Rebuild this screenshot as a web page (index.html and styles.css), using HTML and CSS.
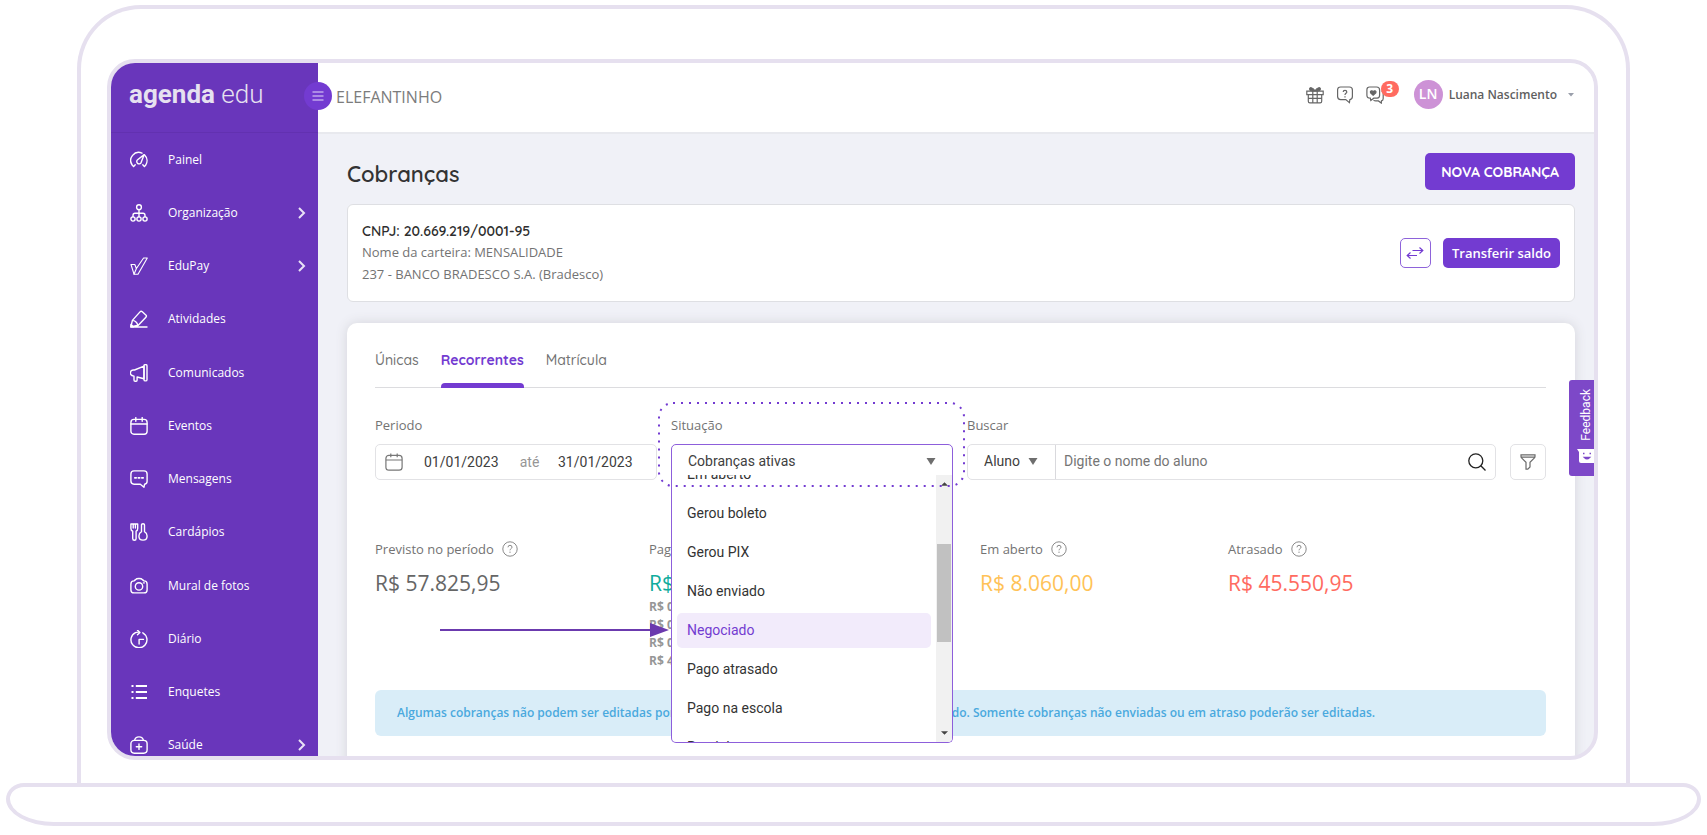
FILE: index.html
```html
<!DOCTYPE html>
<html lang="pt-BR">
<head>
<meta charset="utf-8">
<meta name="viewport" content="width=device-width, initial-scale=1">
<title>Cobranças - Agenda Edu</title>
<link rel="stylesheet" href="styles.css">
</head>
<body>
<div class="laptop">
  <div class="lid">
    <div class="screen">
      <aside class="sidebar">
        <a class="logo" href="#"><b>agenda</b> edu</a>
        <nav class="menu">
          <a href="#"><svg class="ico" viewBox="0 0 18 18"><path d="M3.6 15.6 2.2 14A8 8 0 0 1 12 2.1M14.6 4.1A8 8 0 0 1 15.8 14l-1.4 1.6M3.6 15.6l1.6-1.9M14.4 15.6l-1.6-1.9"/><path d="M14.2 3.6 7.6 8.8a2.3 2.3 0 1 0 3.5 2.8z"/></svg><span>Painel</span></a>
          <a href="#"><svg class="ico" viewBox="0 0 18 18"><circle cx="9" cy="3.2" r="2.4"/><circle cx="3" cy="15" r="2.1"/><circle cx="9" cy="15" r="2.1"/><circle cx="15" cy="15" r="2.1"/><path d="M9 5.6v7.3M3 12.9v-1.5Q3 9.3 5 9.3h8q2 0 2 2.1v1.5"/></svg><span>Organização</span><svg class="chev" viewBox="0 0 8 12"><path d="m1 1 5 5-5 5"/></svg></a>
          <a href="#"><svg class="ico thin" viewBox="0 0 18 18"><path d="M1 7.500h3.800l1.600 4L13.600 1h3.700L8 17.200H4z"/><path d="M4 17.200 6.400 11.500"/></svg><span>EduPay</span><svg class="chev" viewBox="0 0 8 12"><path d="m1 1 5 5-5 5"/></svg></a>
          <a href="#"><svg class="ico" viewBox="0 0 18 18"><path d="M.8 17H17M.8 17l1.600-6.600L10 1.900q1.100-1.200 2.300-.1l3.500 3.100q1.200 1.100.1 2.300l-7.600 8L.8 17M2.400 10.400q4 .2 5.400 4.800"/><path d="m1 14.500 2.400 2.300H1z" fill="#fff"/></svg><span>Atividades</span></a>
          <a href="#"><svg class="ico" viewBox="0 0 18 18"><path d="M14 2.200 4.500 6H3.600A2.900 2.900 0 0 0 3 11.800l1 .4v3.900q0 1.200 1.200 1.200h.9q1 0 1-1.200V13l6.900 1.800z"/><path d="M14 1.800q0-1.200 1.500-1.200T17 1.800v13.900q0 1.200-1.500 1.200T14 15.700z"/></svg><span>Comunicados</span></a>
          <a href="#"><svg class="ico" viewBox="0 0 18 18"><rect x=".9" y="2.4" width="16.2" height="14.8" rx="3"/><path d="M.9 7h16.2M5.800.6v3.600M12.200.6v3.600"/></svg><span>Eventos</span></a>
          <a href="#"><svg class="ico" viewBox="0 0 18 18"><path d="M4 .9h10q3.100 0 3.100 3.100v7.200q0 2.600-2.500 3l-.6 3-3.700-3H4q-3.100 0-3.100-3.100V4Q.9.9 4 .9z"/><path d="M4.800 7.800h1.400M8.300 7.800h1.400M11.800 7.800h1.400" stroke-width="1.7"/></svg><span>Mensagens</span></a>
          <a href="#"><svg class="ico" viewBox="0 0 18 18"><path d="M.9 1h6.800v4.500q0 2-1.600 2.700v7.200q0 1.800-1.700 1.800t-1.700-1.800V8.200Q.9 7.500.9 5.500zM3.200 1v4M5.400 1v4"/><path d="M11.500 1.900q0-1.200 1.500-1.200t1.500 1.200v6.800q2.600 1.600 2.600 4.200 0 4.200-4.100 4.200T8.900 12.900q0-2.600 2.600-4.200z"/></svg><span>Cardápios</span></a>
          <a href="#"><svg class="ico" viewBox="0 0 18 18"><path d="M4 3.900 5.600 2.600Q6.300 1.500 9 1.500t3.400 1.100L14 3.900q3.100.1 3.100 3v6q0 3-3.100 3H4q-3.100 0-3.100-3v-6q0-2.900 3.100-3z"/><circle cx="9" cy="9.4" r="3.7"/><path d="M13.400 5.900h.9"/></svg><span>Mural de fotos</span></a>
          <a href="#"><svg class="ico" viewBox="0 0 18 18"><path d="M12.800 2.800a8 8 0 1 1-7.300-.2Q7 1.900 9.500 2.200M7.500.2l2.400 2.200-2.400 2.400M9.100 14V9.400h4.400"/></svg><span>Diário</span></a>
          <a href="#"><svg class="ico bold" viewBox="0 0 18 18"><path d="M1.500 3h2M5.800 3H17M1.500 9h2M5.800 9H17M1.500 15h2M5.800 15H17"/></svg><span>Enquetes</span></a>
          <a href="#"><svg class="ico" viewBox="0 0 18 18"><rect x=".9" y="4.4" width="16.2" height="12.8" rx="3.4"/><path d="M4.700 4.200Q5.200.9 9 .9t4.300 3.300M9 8v5.400M6.300 10.700h5.400"/></svg><span>Saúde</span><svg class="chev" viewBox="0 0 8 12"><path d="m1 1 5 5-5 5"/></svg></a>
        </nav>
        <button class="toggle" type="button" aria-label="Recolher menu"><svg viewBox="0 0 12 10"><path d="M.5 1h11M.5 5h11M.5 9h11"/></svg></button>
      </aside>

      <div class="page">
        <header class="topbar">
          <span class="school">ELEFANTINHO</span>
          <div class="tools">
            <button class="plain" type="button" aria-label="Novidades"><svg class="tool" viewBox="0 0 18 18"><path d="M.8 5.2h16.4v3.4H.8zM2.3 8.6h13.4v6.6q0 1.6-1.6 1.6H3.9q-1.6 0-1.6-1.6zM6.8 5.2v11.6M11.2 5.2v11.6M2.3 12.3h13.4"/><path d="M9 4.8C6.3 5.2 3.6 4.8 3.6 3S6.3.9 9 4.8c2.7-3.9 5.4-3.6 5.4-1.8S11.7 5.2 9 4.8z" fill="#666"/></svg></button>
            <button class="plain" type="button" aria-label="Ajuda"><svg class="tool" viewBox="0 0 18 18"><path d="M4.600 1h8.800q3 0 3 3v6.600q0 2.700-2.500 3l-.5 3-3.600-3H4.600q-3 0-3-3V4q0-3 3-3z"/><path d="M7.200 6.100q0-1.800 1.800-1.800t1.800 1.700c0 1.400-1.800 1.300-1.800 2.900M9 10.300v1.100"/></svg></button>
            <button class="plain chat" type="button" aria-label="Mensagens, 3 novas"><svg class="tool" viewBox="0 0 18 18"><path d="M3.600 1h7q3 0 3 3v5.200q0 2.600-2.500 3H7.800l-3 2.300-.5-2.300q-3.400 0-3.400-3V4q0-3 2.700-3z"/><path d="M15.500 4.800q1.700.6 1.700 2.600v5q0 2-1.700 2.400l-.2 2.300-2.900-2.200H9.800q-1.300 0-2.300-.8"/><path d="M7.200 9.200 4.600 6.800q-.6-1.500.7-1.900 1.200-.2 1.900.9.700-1.100 1.900-.9 1.300.4.700 1.900z" fill="#666"/></svg><span class="badge">3</span></button>
          </div>
          <button class="plain user" type="button"><span class="avatar">LN</span><span>Luana Nascimento</span><svg class="caret" viewBox="0 0 6 4"><path d="M0 0h6L3 3.400z"/></svg></button>
        </header>

        <main class="content">
          <div class="title-row">
            <h1>Cobranças</h1>
            <button class="primary large" type="button">NOVA COBRANÇA</button>
          </div>

          <section class="wallet">
            <div>
              <h2>CNPJ: 20.669.219/0001-95</h2>
              <p>Nome da carteira: MENSALIDADE</p>
              <p>237 - BANCO BRADESCO S.A. (Bradesco)</p>
            </div>
            <div class="wallet-actions">
              <button class="swap" type="button" aria-label="Trocar carteira"><svg viewBox="0 0 18 12"><path d="M6.500 3.500h10M13.500.5l3.300 3-3.300 3M11 8.500H1.200M4.500 5.500l-3.300 3 3.300 3"/></svg></button>
              <button class="primary" type="button">Transferir saldo</button>
            </div>
          </section>

          <section class="panel">
            <nav class="tabs">
              <a href="#">Únicas</a>
              <a class="active" href="#">Recorrentes</a>
              <a href="#">Matrícula</a>
            </nav>

            <form class="filters">
              <div class="field">
                <label for="from">Periodo</label>
                <div class="box period">
                  <svg class="cal" viewBox="0 0 18 18"><rect x=".9" y="2.4" width="16.2" height="14.8" rx="3"/><path d="M.9 7h16.2M5.800.6v3.600M12.200.6v3.600"/></svg>
                  <input id="from" type="text" value="01/01/2023">
                  <span>até</span>
                  <input type="text" value="31/01/2023" aria-label="Fim do periodo">
                </div>
              </div>
              <div class="field">
                <label for="status">Situação</label>
                <div class="combo">
                  <select id="status" class="box"><option>Cobranças ativas</option></select>
                  <svg class="down" viewBox="0 0 10 7"><path d="M.5 0h9L5 7z"/></svg>
                  <div class="list">
                    <ul>
                      <li>Em aberto</li>
                      <li>Gerou boleto</li>
                      <li>Gerou PIX</li>
                      <li>Não enviado</li>
                      <li class="chosen">Negociado</li>
                      <li>Pago atrasado</li>
                      <li>Pago na escola</li>
                      <li>Parcialmente pago</li>
                    </ul>
                    <div class="scroll" aria-hidden="true">
                      <svg viewBox="0 0 8 4"><path d="M0 4h8L4 0z"/></svg>
                      <span class="thumb"></span>
                      <svg viewBox="0 0 8 4"><path d="M0 0h8L4 4z"/></svg>
                    </div>
                  </div>
                  <svg class="spot" aria-hidden="true"><rect x="1" y="1" rx="14"/></svg>
                  <svg class="arrow" viewBox="0 0 230 14" aria-hidden="true"><path class="shaft" d="M0 7h212"/><path d="M210 0v14l19-7z"/></svg>
                </div>
              </div>
              <div class="field grow">
                <label for="who">Buscar</label>
                <div class="box search">
                  <span class="kind"><select id="who"><option>Aluno</option></select><svg class="down" viewBox="0 0 10 7"><path d="M.5 0h9L5 7z"/></svg></span>
                  <input type="text" placeholder="Digite o nome do aluno" aria-label="Nome do aluno">
                  <button class="plain" type="button" aria-label="Pesquisar"><svg class="lens" viewBox="0 0 18 18"><circle cx="7.8" cy="7.8" r="7"/><path d="m12.800 12.800 4.700 4.700"/></svg></button>
                </div>
              </div>
              <button class="box funnel" type="button" aria-label="Filtrar"><svg viewBox="0 0 16 16"><path d="M1 .8h14v1.600q0 1-.8 1.700L10 8.300V13l-2.200 2.200H6V8.300L1.800 4.100Q1 3.400 1 2.400zM1 3.200h14"/></svg></button>
            </form>

            <dl class="stats">
              <div><dt>Previsto no período <svg class="help" viewBox="0 0 16 16"><circle cx="8" cy="8" r="7.2"/><path d="M6 6.300q0-2 2-2t2 1.900c0 1.500-2 1.500-2 3.100M8 10.600v1.300"/></svg></dt><dd>R$ 57.825,95</dd></div>
              <div class="paid"><dt>Pago</dt><dd>R$ 4.214,00</dd><dd class="sub">R$ 0,00</dd><dd class="sub">R$ 0,00</dd><dd class="sub">R$ 0,00</dd><dd class="sub">R$ 4.214,00</dd></div>
              <div class="open"><dt>Em aberto <svg class="help" viewBox="0 0 16 16"><circle cx="8" cy="8" r="7.2"/><path d="M6 6.300q0-2 2-2t2 1.900c0 1.500-2 1.500-2 3.100M8 10.600v1.300"/></svg></dt><dd>R$ 8.060,00</dd></div>
              <div class="late"><dt>Atrasado <svg class="help" viewBox="0 0 16 16"><circle cx="8" cy="8" r="7.2"/><path d="M6 6.300q0-2 2-2t2 1.900c0 1.500-2 1.500-2 3.100M8 10.600v1.300"/></svg></dt><dd>R$ 45.550,95</dd></div>
            </dl>

            <p class="notice">Algumas cobranças não podem ser editadas porque já foram pagas ou já têm algum boleto gerado. Somente cobranças não enviadas ou em atraso poderão ser editadas.</p>
          </section>
        </main>
      </div>

      <button class="feedback" type="button"><svg viewBox="0 0 18 14"><path d="M0 0h18v14H4q-2 0-2-2V3z" fill="#fff"/><path d="M6 4.500h1.500M12.500 4.500H14M7.500 8.500q2.500 2.500 5 0z" stroke="#7d48c8" stroke-width="1.5" fill="#7d48c8"/></svg><span>Feedback</span></button>
    </div>
  </div>
  <div class="base"></div>
</div>
</body>
</html>
```
FILE: styles.css
```css
* { box-sizing: border-box; }

body {
  margin: 0;
  background: #fff;
  color: #737373;
  font: 13px/20px "Open Sans", "Noto Sans", sans-serif;
}

h1, h2, p, ul, dl, dd { margin: 0; padding: 0; }
ul { list-style: none; }
a { color: inherit; text-decoration: none; }
button, input, select { font: inherit; color: inherit; margin: 0; }
svg { display: block; fill: none; flex: none; }

/* Device frame */
.laptop {
  display: flex;
  flex-direction: column;
  height: 100vh;
  padding: 5px 6px 9px;
}
.lid {
  flex: 1;
  display: flex;
  min-height: 0;
  margin: 0 71px;
  padding: 50px 28px 23px 26px;
  border: 4px solid #e6e0ef;
  border-bottom: 0;
  border-radius: 64px 64px 0 0;
}
.screen {
  position: relative;
  flex: 1;
  display: flex;
  min-width: 0;
  overflow: hidden;
  border: 4px solid #e6e0ef;
  border-radius: 28px;
  background: #f0f1f7;
}
.base {
  height: 43px;
  border: 4px solid #e6e0ef;
  border-radius: 18px 18px 48px 48px / 16px 16px 27px 27px;
}

/* Sidebar */
.sidebar {
  position: relative;
  z-index: 2;
  display: flex;
  flex-direction: column;
  flex: none;
  width: 207px;
  background: #6936bb;
  color: #fff;
}
.logo {
  height: 70px;
  padding: 15px 18px;
  border-bottom: 1px solid #6231b0;
  color: #e6e1f0;
  font: 300 26px/32px "Roboto", sans-serif;
}
.logo b { font-weight: 700; }
.menu {
  flex: 1;
  display: grid;
  grid-auto-rows: 1fr;
  margin-bottom: -16px;
}
.menu a {
  display: flex;
  align-items: center;
  gap: 20px;
  padding: 0 12px 0 19px;
  font-size: 12px;
}
.menu span { flex: 1; }
.ico { width: 18px; height: 18px; stroke: #fff; stroke-width: 1.4; stroke-linejoin: round; stroke-linecap: round; }
.ico.thin { stroke-width: 1.1; }
.ico.bold { stroke-width: 2; stroke-linecap: butt; }
.chev { width: 8px; height: 12px; stroke: #e9e2f6; stroke-width: 2; }
.toggle {
  position: absolute;
  top: 19px;
  right: -14px;
  display: grid;
  place-items: center;
  width: 28px;
  height: 28px;
  padding: 0;
  border: 0;
  border-radius: 50%;
  background: #733bd1;
}
.toggle svg { width: 12px; height: 10px; stroke: #e6dcf8; }

/* Top bar */
.page { flex: 1; min-width: 0; }
.topbar {
  display: flex;
  align-items: center;
  height: 71px;
  padding: 0 20px 6px 18px;
  border-bottom: 2px solid #e8e9ee;
  background: #fff;
}
.school { margin-right: auto; padding-top: 5px; font-size: 16px; color: #7c7c7c; }
.plain { padding: 0; border: 0; background: none; }
.tools { display: flex; gap: 12px; margin-right: 30px; }
.tool { width: 18px; height: 18px; stroke: #666; stroke-width: 1.2; }
.chat { position: relative; }
.badge {
  position: absolute;
  top: -5px;
  left: 15px;
  width: 18px;
  height: 16px;
  border-radius: 8px;
  background: #ff6b60;
  color: #fff;
  font-size: 12px;
  font-weight: 700;
  line-height: 15px;
}
.user { display: flex; align-items: center; gap: 6px; font-size: 12px; font-weight: 600; color: #5f5f5f; }
.avatar {
  width: 29px;
  height: 29px;
  border-radius: 50%;
  background: #cd92d6;
  color: #fff;
  font-size: 14px;
  line-height: 28px;
}
.caret { width: 6px; height: 4px; margin-left: 5px; fill: #9a9fab; }

/* Content */
.content { padding: 19px 19px 0 29px; }
.title-row { display: flex; align-items: center; justify-content: space-between; margin-bottom: 14px; }
h1 { padding-top: 4px; font: 600 22px/32px "Quicksand", "Lato", sans-serif; color: #333; }
.primary {
  height: 30px;
  padding: 0 9px;
  border: 0;
  border-radius: 5px;
  background: #733bd1;
  color: #fff;
  font-weight: 600;
}
.primary.large {
  height: 37px;
  padding: 0 16px;
  font: 700 14px/20px "Quicksand", "Lato", sans-serif;
}
.wallet {
  display: flex;
  align-items: center;
  justify-content: space-between;
  margin-bottom: 21px;
  padding: 16px 14px;
  border: 1px solid #dedfe3;
  border-radius: 6px;
  background: #fff;
}
.wallet h2 { font: 600 14px/20px "Quicksand", "Lato", sans-serif; color: #2e2e2e; }
.wallet p { line-height: 22px; }
.wallet-actions { display: flex; gap: 12px; }
.swap {
  display: grid;
  place-items: center;
  width: 31px;
  height: 30px;
  padding: 0;
  border: 1px solid #8e63da;
  border-radius: 5px;
  background: #fff;
}
.swap svg { width: 18px; height: 12px; stroke: #733bd1; stroke-width: 1.2; }
.panel {
  height: 600px;
  padding: 26px 29px 0 28px;
  border-radius: 10px;
  background: #fff;
  box-shadow: 0 0 12px #d4d5db;
}
.tabs {
  display: flex;
  gap: 22px;
  margin-bottom: 27px;
  border-bottom: 1px solid #dcdcdf;
  font: 500 14px/22px "Quicksand", "Lato", sans-serif;
}
.tabs a { padding-bottom: 16px; }
.tabs .active { color: #733bd1; font-weight: 700; position: relative; }
.tabs .active::after {
  content: "";
  position: absolute;
  inset: auto 0 -1px;
  height: 5px;
  border-radius: 4px 4px 0 0;
  background: #733bd1;
}

/* Filters */
.filters { display: flex; align-items: flex-end; gap: 14px; margin-bottom: 59px; }
.field { width: 282px; }
.field.grow { flex: 1; width: auto; }
.field label { display: block; margin-bottom: 9px; }
.box {
  width: 100%;
  height: 36px;
  border: 1px solid #e2e2e5;
  border-radius: 5px;
  background: #fff;
  font: 14px/20px "Roboto", sans-serif;
}
.box input, .box select { min-width: 0; padding: 0; border: 0; background: none; outline: 0; }
.box.period { display: flex; align-items: center; padding: 0 21px 0 9px; color: #969696; }
.cal { width: 18px; height: 18px; margin-right: 21px; stroke: #777; stroke-width: 1.2; }
.period input { width: 77px; color: #404040; }
.period span { flex: 1; text-align: center; }
.combo { position: relative; }
.combo > select {
  display: block;
  appearance: none;
  padding: 0 16px 3px;
  border-color: #8d5edb;
  color: #404040;
}
.down { width: 10px; height: 7px; fill: #6e6e6e; }
.combo .down { position: absolute; top: 14px; right: 17px; }
.list {
  position: absolute;
  z-index: 1;
  top: 31px;
  left: 0;
  right: 0;
  display: flex;
  height: 268px;
  overflow: hidden;
  border: 1px solid #8d5edb;
  border-top: 0;
  border-radius: 0 0 5px 5px;
  background: #fff;
  color: #333;
  font: 14px/35px "Roboto", sans-serif;
}
.list ul { flex: 1; margin-top: -20px; padding: 0 5px; }
.list li { margin: 2px 0 4px; padding: 0 10px; border-radius: 5px; }
.list .chosen { background: #f2ebfb; color: #733bd1; }
.scroll {
  display: flex;
  flex-direction: column;
  align-items: center;
  justify-content: space-between;
  width: 16px;
  padding: 7px 1px;
  background: #f1f1f1;
}
.scroll svg { width: 7px; height: 4px; fill: #444; }
.thumb { width: 14px; height: 98px; margin-bottom: 32px; background: #c1c1c1; }
.spot {
  position: absolute;
  z-index: 2;
  top: -42px;
  left: -13px;
  width: 307px;
  height: 85px;
  pointer-events: none;
}
.spot rect {
  width: calc(100% - 2px);
  height: calc(100% - 2px);
  stroke: #733bd1;
  stroke-width: 2;
  stroke-dasharray: 2 6;
}
.arrow {
  position: absolute;
  z-index: 2;
  top: 179px;
  right: 100%;
  width: 230px;
  height: 14px;
  margin-right: 1px;
  fill: #6b3aae;
}
.shaft { stroke: #6b3aae; stroke-width: 2; }
.box.search { display: flex; align-items: center; padding-right: 9px; }
.kind {
  display: flex;
  align-items: center;
  gap: 8px;
  align-self: stretch;
  width: 88px;
  padding: 0 16px 2px;
  border-right: 1px solid #d9d9dd;
}
.kind select { appearance: none; color: #404040; }
.search input { flex: 1; padding: 0 8px 3px; }
.search input::placeholder { color: #757575; }
.lens { width: 18px; height: 18px; stroke: #222; stroke-width: 1.3; }
.box.funnel { display: grid; place-items: center; flex: none; width: 36px; padding: 0; }
.funnel svg { width: 16px; height: 16px; stroke: #6a6a6a; stroke-width: 1.2; }

/* Totals */
.stats { display: grid; grid-template-columns: 274fr 331fr 248fr 318fr; height: 151px; }
.stats dt { display: flex; align-items: center; gap: 8px; margin-bottom: 9px; }
.help { width: 16px; height: 16px; stroke: #8a8a8a; stroke-width: 1; }
.stats dd { font-size: 21px; line-height: 30px; color: #666; }
.stats .paid dd { color: #0fac9c; }
.stats .open dd { color: #ffc257; }
.stats .late dd { color: #ff6b60; }
.stats .paid .sub { color: #969696; font-size: 12px; line-height: 18px; font-weight: 700; }
.notice {
  padding: 13px 22px;
  overflow: hidden;
  border-radius: 6px;
  background: #d9edf8;
  color: #4aa9de;
  font-size: 12px;
  font-weight: 600;
  white-space: nowrap;
}

/* Feedback tab */
.feedback {
  position: absolute;
  z-index: 3;
  top: 317px;
  right: 0;
  display: flex;
  flex-direction: column-reverse;
  align-items: flex-start;
  gap: 8px;
  width: 25px;
  height: 96px;
  padding: 10px 0 13px 8px;
  overflow: hidden;
  border: 0;
  border-radius: 3px 0 0 3px;
  background: #7d48c8;
  color: #fff;
  font: 12px/18px "Roboto", sans-serif;
}
.feedback span { writing-mode: vertical-rl; transform: rotate(180deg); }
.feedback svg { width: 18px; height: 14px; }
```
